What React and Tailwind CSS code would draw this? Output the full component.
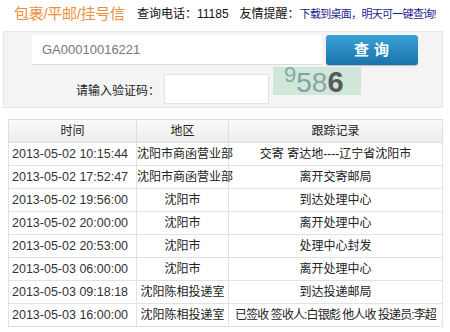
const rows = [
  ['2013-05-02 10:15:44', '沈阳市商函营业部', '交寄 寄达地----辽宁省沈阳市'],
  ['2013-05-02 17:52:47', '沈阳市商函营业部', '离开交寄邮局'],
  ['2013-05-02 19:56:00', '沈阳市', '到达处理中心'],
  ['2013-05-02 20:00:00', '沈阳市', '离开处理中心'],
  ['2013-05-02 20:53:00', '沈阳市', '处理中心封发'],
  ['2013-05-03 06:00:00', '沈阳市', '离开处理中心'],
  ['2013-05-03 09:18:18', '沈阳陈相投递室', '到达投递邮局'],
  ['2013-05-03 16:00:00', '沈阳陈相投递室', '已签收 签收人:白银彪 他人收 投递员:李超', true],
]

const cjk = { fontFamily: '"Liberation Sans", "Noto Sans CJK SC", sans-serif' }

function Captcha() {
  return (
    <div className="w-[88px] h-[28px] bg-[#cfe6d8] flex items-end pl-[11px] leading-none select-none overflow-visible" style={{ fontFamily: '"Liberation Sans", sans-serif' }}>
      <span className="text-[22px] text-[#7fae9f] self-start mt-[-3px]">9</span>
      <span className="text-[28px] text-[#7fa2a3] mb-[-2px]">5</span>
      <span className="text-[28px] text-[#8ea5a7] mb-[-2px]">8</span>
      <span className="text-[29px] text-[#555a5c] font-bold mb-[-2px]">6</span>
    </div>
  )
}

export default function App() {
  return (
    <div className="w-[450px] h-[332px] bg-white overflow-hidden text-[#222]" style={cjk}>
      {/* top bar */}
      <div className="h-[31px] flex items-center pl-[14px] pb-[3px] whitespace-nowrap">
        <span className="shrink-0 w-[108px] text-[15px] text-[#ec8f3c] tracking-[-0.3px]">包裹/平邮/挂号信</span>
        <span className="shrink-0 ml-[15px] text-[12px] text-[#111]">查询电话：11185</span>
        <span className="shrink-0 ml-[11px] text-[12px] text-[#111]">友情提醒：</span>
        <span className="shrink-0 text-[11px] text-[#1c1c8c] tracking-[-0.7px]">下载到桌面，明天可一键查询!</span>
      </div>

      {/* search panel */}
      <div className="ml-[3px] w-[440px] h-[77px] bg-[#f4f4f4] border border-[#e6e6e6] pt-[3px]">
        <div className="flex items-center pl-[28px] gap-[4px]">
          <div className="w-[290px] h-[30px] bg-white border-b border-[#dcdcdc] flex items-center pl-[10px] text-[13px] text-[#777]">
            GA00010016221
          </div>
          <button className="w-[92px] h-[30px] rounded-[3px] bg-gradient-to-b from-[#3aa3d8] to-[#1874ab] text-white text-[15px] font-bold tracking-[5px] pl-[4px] shadow-[0_1px_1px_rgba(0,0,0,0.25)]">
            查询
          </button>
        </div>
        <div className="flex items-start mt-[2px]">
          <div className="w-[156px] text-right text-[12px] mt-[15px] text-[#222]">请输入验证码：</div>
          <div className="w-[105px] h-[30px] bg-white border border-[#e2e2e2] mt-[7px] ml-[4px]" />
          <div className="ml-[4px]">
            <Captcha />
          </div>
        </div>
      </div>

      {/* tracking table */}
      <table className="mt-[11px] ml-[8px] w-[434px] border-collapse table-fixed text-[12px]">
        <colgroup>
          <col className="w-[128px]" />
          <col className="w-[92px]" />
          <col className="w-[214px]" />
        </colgroup>
        <thead>
          <tr className="h-[23px] bg-gradient-to-b from-[#fafafa] to-[#ececec]">
            <th className="border border-[#dedede] font-normal">时间</th>
            <th className="border border-[#dedede] font-normal">地区</th>
            <th className="border border-[#dedede] font-normal">跟踪记录</th>
          </tr>
        </thead>
        <tbody>
          {rows.map(([t, a, r, long], i) => (
            <tr key={i} className="h-[23px]">
              <td className="border border-[#e2e2e2] pl-[3px] text-[12.5px] text-[#333] whitespace-nowrap">{t}</td>
              <td className="border border-[#e2e2e2] text-center whitespace-nowrap">{a}</td>
              <td className={long ? 'border border-[#e2e2e2] text-center whitespace-nowrap tracking-[-0.9px]' : 'border border-[#e2e2e2] text-center whitespace-nowrap'}>{r}</td>
            </tr>
          ))}
        </tbody>
      </table>
    </div>
  )
}
